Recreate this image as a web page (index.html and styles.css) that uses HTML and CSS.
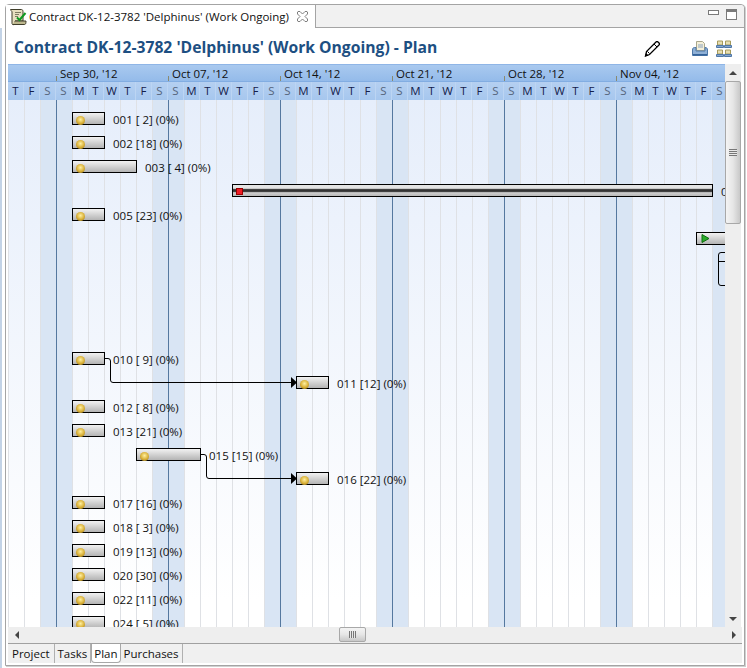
FILE: index.html
```html
<!DOCTYPE html>
<html lang="en">
<head>
<meta charset="UTF-8">
<title>Contract Plan</title>
<link rel="stylesheet" href="styles.css">
</head>
<body>
<div class="window">
    <div class="tabstrip">
        <div class="editor-tab">
            <svg class="doc-icon" width="17" height="18" viewBox="0 0 17 18">
                <path d="M.5 1.500h11c1 0 1.500 1 1.500 2V13H5v2.500c0 1.500-3 1.500-3 0V4c0-1-1.500-1.500-1.500-2.500z" fill="#e6dfc0" stroke="#3f3d2a"/>
                <path d="M2.500 16.500h12c1 0 1.500-1 1.500-3.500H5" fill="#bdb78e" stroke="#3f3d2a"/>
                <path d="M5 4.500h6M5 6.500h4M5 8.500h3" stroke="#7d7b62"/>
                <path d="M7 9.500l2.500 2.500 6-7" fill="none" stroke="#0f9a22" stroke-width="2"/>
            </svg>
            <span class="editor-tab-label">Contract DK-12-3782 'Delphinus' (Work Ongoing)</span>
            <svg class="close-icon" width="11" height="11" viewBox="0 0 11 11">
                <path d="M1 .5h2l2.500 2.500L8 .5h2l.5.5v2L8 5.500 10.500 8v2l-.5.500H8L5.500 8 3 10.500H1l-.5-.5V8L3 5.500.5 3V1z" fill="#fff" stroke="#7f7f7f"/>
            </svg>
        </div>
        <div class="window-btns">
            <span class="btn-min"></span>
            <span class="btn-max"></span>
        </div>
    </div>

    <div class="title-bar">
        <h2>Contract DK-12-3782 'Delphinus' (Work Ongoing) - Plan</h2>
        <svg class="pencil" width="16" height="16" viewBox="0 0 16 16">
            <path d="M12 1q1-1 2 0l1 1q1 1 0 2l-9.500 9.500-4 1.500 1-4.500z" fill="#fff" stroke="#000" stroke-width="1.300"/>
            <path d="M3.500 10.500l2 2M10 3l3 3" stroke="#000"/>
            <path d="M1 15.500l1-3.500 2.500 2.500z" fill="#000"/>
        </svg>
        <svg class="printer" width="16" height="16" viewBox="0 0 16 16">
            <path d="M4.500.5h6l2 2v7h-8z" fill="#f4efd8" stroke="#a9a68c"/>
            <path d="M6 4h5M6 6h5" stroke="#8ba3c0"/>
            <path d="M.5 9c0-2 1-2.500 2-2.500h1.500V10h9V6.500c1.500 0 2.500.5 2.500 2.500v5.500H.5z" fill="#8fb0d6" stroke="#4e78a8"/>
            <path d="M1 13h14v1.500H1z" fill="#35639a"/>
        </svg>
        <svg class="layout-icon" width="16" height="17" viewBox="0 0 16 17">
            <path d="M1.500 1h5v4h-5zM9.500 1h5v4h-5zM1.500 10h5v4h-5zM9.500 10h5v4h-5z" fill="#e6ddb0" stroke="#a59a5c"/>
            <path d="M.5 5.500h7v2h-7zM8.500 5.500h7v2h-7zM.5 14.500h7v2h-7zM8.500 14.500h7v2h-7z" fill="#86a6cf" stroke="#4f77a6"/>
        </svg>
    </div>

    <div class="plan">
        <div class="chart">
            <div class="months">
                <span class="month month-first">Sep 30, '12</span>
                <span class="month">Oct 07, '12</span>
                <span class="month">Oct 14, '12</span>
                <span class="month">Oct 21, '12</span>
                <span class="month">Oct 28, '12</span>
                <span class="month">Nov 04, '12</span>
            </div>
            <div class="days">
                <span>T</span><span>F</span><span class="we">S</span><span class="we">S</span><span>M</span><span>T</span><span>W</span>
                <span>T</span><span>F</span><span class="we">S</span><span class="we">S</span><span>M</span><span>T</span><span>W</span>
                <span>T</span><span>F</span><span class="we">S</span><span class="we">S</span><span>M</span><span>T</span><span>W</span>
                <span>T</span><span>F</span><span class="we">S</span><span class="we">S</span><span>M</span><span>T</span><span>W</span>
                <span>T</span><span>F</span><span class="we">S</span><span class="we">S</span><span>M</span><span>T</span><span>W</span>
                <span>T</span><span>F</span><span class="we">S</span><span class="we">S</span><span>M</span><span>T</span><span>W</span>
                <span>T</span><span>F</span><span class="we">S</span>
            </div>
            <div class="canvas">
                <svg class="links" width="717" height="527" viewBox="0 0 717 527">
                    <path d="M97 258.500h3q2.500 0 2.500 2.500v19q0 2.500 2.500 2.500h180" fill="none" stroke="#000"/>
                    <path d="M283 277l6 5.500-6 5.500z" fill="#000"/>
                    <path d="M193 354.500h3q2.500 0 2.500 2.500v19q0 2.500 2.500 2.500h84" fill="none" stroke="#000"/>
                    <path d="M283 373l6 5.500-6 5.500z" fill="#000"/>
                    <path d="M717 152.500h-4q-2.500 0-2.500 2.500v28q0 2.500 2.500 2.500h4M710.500 161.500h6.500" fill="none" stroke="#000"/>
                </svg>

                <div class="task" style="top:12px;left:64px"><div class="bar" style="width:33px"><i class="dot"></i></div><span>001 [ 2] (0%)</span></div>
                <div class="task" style="top:36px;left:64px"><div class="bar" style="width:33px"><i class="dot"></i></div><span>002 [18] (0%)</span></div>
                <div class="task" style="top:60px;left:64px"><div class="bar" style="width:65px"><i class="dot"></i></div><span>003 [ 4] (0%)</span></div>
                <div class="task" style="top:84px;left:224px"><div class="bar bar-group" style="width:481px"><i class="stop"></i></div><span>004 [ 7] (0%)</span></div>
                <div class="task" style="top:108px;left:64px"><div class="bar" style="width:33px"><i class="dot"></i></div><span>005 [23] (0%)</span></div>
                <div class="task" style="top:132px;left:688px"><div class="bar" style="width:65px"><svg class="play" width="9" height="9" viewBox="0 0 9 9"><path d="M1 .5l7 4-7 4z" fill="#2bab2b" stroke="#0f6e0f"/></svg></div></div>
                <div class="task" style="top:252px;left:64px"><div class="bar" style="width:33px"><i class="dot"></i></div><span>010 [ 9] (0%)</span></div>
                <div class="task" style="top:276px;left:288px"><div class="bar" style="width:33px"><i class="dot"></i></div><span>011 [12] (0%)</span></div>
                <div class="task" style="top:300px;left:64px"><div class="bar" style="width:33px"><i class="dot"></i></div><span>012 [ 8] (0%)</span></div>
                <div class="task" style="top:324px;left:64px"><div class="bar" style="width:33px"><i class="dot"></i></div><span>013 [21] (0%)</span></div>
                <div class="task" style="top:348px;left:128px"><div class="bar" style="width:65px"><i class="dot"></i></div><span>015 [15] (0%)</span></div>
                <div class="task" style="top:372px;left:288px"><div class="bar" style="width:33px"><i class="dot"></i></div><span>016 [22] (0%)</span></div>
                <div class="task" style="top:396px;left:64px"><div class="bar" style="width:33px"><i class="dot"></i></div><span>017 [16] (0%)</span></div>
                <div class="task" style="top:420px;left:64px"><div class="bar" style="width:33px"><i class="dot"></i></div><span>018 [ 3] (0%)</span></div>
                <div class="task" style="top:444px;left:64px"><div class="bar" style="width:33px"><i class="dot"></i></div><span>019 [13] (0%)</span></div>
                <div class="task" style="top:468px;left:64px"><div class="bar" style="width:33px"><i class="dot"></i></div><span>020 [30] (0%)</span></div>
                <div class="task" style="top:492px;left:64px"><div class="bar" style="width:33px"><i class="dot"></i></div><span>022 [11] (0%)</span></div>
                <div class="task" style="top:516px;left:64px"><div class="bar" style="width:33px"><i class="dot"></i></div><span>024 [ 5] (0%)</span></div>
            </div>
        </div>
        <div class="vscroll">
            <div class="arrow"><i class="tri-up"></i></div>
            <div class="vthumb"><i class="vgrip"></i></div>
            <div class="track"></div>
            <div class="arrow"><i class="tri-down"></i></div>
        </div>
    </div>

    <div class="hscroll">
        <div class="arrow-h"><i class="tri-left"></i></div>
        <div class="hthumb"><i class="hgrip"></i></div>
        <div class="track"></div>
        <div class="arrow-h"><i class="tri-right"></i></div>
    </div>

    <div class="sheet-tabs">
        <span class="sheet-tab">Project</span>
        <span class="sheet-tab">Tasks</span>
        <span class="sheet-tab active">Plan</span>
        <span class="sheet-tab">Purchases</span>
    </div>
</div>
</body>
</html>
```

FILE: styles.css
```css
html, body {
    height: 100%;
}

body {
    margin: 0;
    overflow: hidden;
    font-family: "Open Sans", "Noto Sans", sans-serif;
    font-size: 11.5px;
    color: #111;
    background: linear-gradient(#fff 28px, #c3d3e6 28px, #c3d3e6 100%) no-repeat 0 0 / 2px 100%, #fff;
}

.window {
    box-sizing: border-box;
    width: 740px;
    height: 662px;
    margin: 4px 0 0 5px;
    border: 1px solid #a4a4a4;
    border-radius: 4px 4px 0 0;
    background: #fff;
    box-shadow: 1px 1px 0 #d0d0d0;
}

/* top tab */
.tabstrip {
    display: flex;
    height: 23px;
    background: #f1f1f1;
    border-radius: 4px 4px 0 0;
}

.editor-tab {
    display: flex;
    align-items: center;
    box-sizing: border-box;
    width: 310px;
    height: 23px;
    padding-left: 4px;
    background: #fff;
    border-right: 1px solid #a4a4a4;
}

.editor-tab-label {
    margin-left: 2px;
    white-space: nowrap;
}

.close-icon {
    margin-left: 8px;
}

.window-btns {
    display: flex;
    flex: 1;
    justify-content: flex-end;
    gap: 7px;
    padding: 4px 7px 0 0;
    border-bottom: 1px solid #a4a4a4;
}

.btn-min {
    width: 9px;
    height: 3px;
    margin-top: 1px;
    border: 1px solid #7a7a7a;
    background: #fff;
}

.btn-max {
    width: 9px;
    height: 7px;
    border: 1px solid #7a7a7a;
    border-top-width: 3px;
    background: #fff;
}

/* form title */
.title-bar {
    display: flex;
    align-items: center;
    height: 36px;
    padding-left: 8px;
}

.title-bar h2 {
    flex: 1;
    margin: 2px 0 0;
    font-size: 15.7px;
    font-weight: 700;
    color: #1d4f82;
    white-space: nowrap;
}

.pencil {
    margin: 6px 32px 0 0;
}

.printer {
    margin: 6px 8px 0 0;
}

.layout-icon {
    margin: 5px 12px 0 0;
}

/* gantt */
.plan {
    display: flex;
    height: 563px;
    padding: 0 2px;
}

.chart {
    width: 717px;
    overflow: hidden;
}

.months {
    display: flex;
    box-sizing: border-box;
    height: 17px;
    padding-left: 48px;
    background: linear-gradient(#a9c9ef, #94bbea);
    border-top: 1px solid #8fb5e6;
}

.month {
    flex: 0 0 112px;
    box-sizing: border-box;
    padding-left: 4px;
    line-height: 17px;
    white-space: nowrap;
    background: linear-gradient(#8a8a70, #8a8a70) no-repeat 0 100% / 1px 5px;
}

.days {
    display: flex;
    height: 19px;
    background: linear-gradient(#b5d0f1, #a6c7ee);
    border-top: 1px solid #82ade2;
    box-sizing: border-box;
}

.days span {
    flex: 0 0 16px;
    box-sizing: border-box;
    line-height: 18px;
    text-align: center;
    color: #14204a;
    border-right: 1px solid #bcd5f3;
}

.days .we {
    color: #55647c;
}

.canvas {
    position: relative;
    height: 527px;
    overflow: hidden;
    background:
        linear-gradient(90deg, #55789f 1px, transparent 1px) 48px 0 / 112px 100%,
        linear-gradient(90deg, #dfe1e5 1px, transparent 1px) 0 0 / 16px 100%,
        linear-gradient(90deg, #d9e5f4 32px, transparent 32px) 32px 0 / 112px 100%,
        linear-gradient(#e6eefb, #fff 95%);
}

.links {
    position: absolute;
    top: 0;
    left: 0;
}

.task {
    position: absolute;
    display: flex;
    align-items: center;
    gap: 8px;
    height: 13px;
    white-space: nowrap;
}

.task span {
    line-height: 13px;
    position: relative;
    top: 1px;
}

.bar {
    position: relative;
    flex: none;
    box-sizing: border-box;
    height: 13px;
    border: 1px solid #000;
    background: linear-gradient(#f2f2f2, #b4b4b4);
}

.bar-group {
    background: linear-gradient(#e4e4e4 30%, #333 42%, #333 58%, #cfcfcf 70%, #b8b8b8);
}

.dot {
    position: absolute;
    top: 3px;
    left: 3px;
    width: 9px;
    height: 9px;
    border-radius: 50%;
    background: radial-gradient(circle at 50% 40%, #fff0a0, #d8ae34 55%, #7f6622);
}

.stop {
    position: absolute;
    top: 3px;
    left: 3px;
    width: 5px;
    height: 5px;
    border: 1px solid #900;
    background: #ee1c25;
}

.play {
    position: absolute;
    top: 1px;
    left: 4px;
}

/* scrollbars */
.vscroll {
    display: flex;
    flex-direction: column;
    width: 16px;
    background: #eeeeee;
}

.track {
    flex: 1;
}

.arrow {
    display: flex;
    align-items: center;
    justify-content: center;
    height: 17px;
}

.vthumb {
    display: flex;
    align-items: center;
    justify-content: center;
    box-sizing: border-box;
    height: 143px;
    border: 1px solid #a8a8a8;
    border-radius: 2px;
    background: linear-gradient(90deg, #f4f4f4, #e6e6e6 50%, #c8c8c8);
}

.vgrip {
    width: 8px;
    height: 7px;
    background: repeating-linear-gradient(#777 0, #777 1px, #e8e8e8 1px, #e8e8e8 2px);
}

.hscroll {
    display: flex;
    box-sizing: border-box;
    height: 17px;
    margin: 0 2px;
    background: #eeeeee;
    border-bottom: 1px solid #a0a0a0;
}

.arrow-h {
    display: flex;
    align-items: center;
    justify-content: center;
    width: 17px;
}

.hthumb {
    display: flex;
    align-items: center;
    justify-content: center;
    box-sizing: border-box;
    width: 27px;
    height: 15px;
    margin: 0 0 0 314px;
    border: 1px solid #a8a8a8;
    border-radius: 2px;
    background: linear-gradient(#f4f4f4, #e6e6e6 50%, #c8c8c8);
}

.hgrip {
    width: 7px;
    height: 7px;
    background: repeating-linear-gradient(90deg, #777 0, #777 1px, #e8e8e8 1px, #e8e8e8 2px);
}

.tri-up, .tri-down, .tri-left, .tri-right {
    width: 0;
    height: 0;
    border: 4px solid transparent;
}

.tri-up {
    border-top-width: 0;
    border-bottom-color: #444;
}

.tri-down {
    border-bottom-width: 0;
    border-top-color: #444;
}

.tri-left {
    border-left-width: 0;
    border-right-color: #444;
}

.tri-right {
    border-right-width: 0;
    border-left-color: #444;
}

/* bottom tabs */
.sheet-tabs {
    display: flex;
    box-sizing: border-box;
    height: 19px;
    margin: 0 2px;
    background: #f0f0f0;
}

.sheet-tab {
    box-sizing: border-box;
    height: 19px;
    padding: 0 3px;
    line-height: 19px;
    border-right: 1px solid #b0b0b0;
}

.sheet-tab:first-child {
    padding: 0 4px;
}

.sheet-tab.active {
    padding: 0 2px;
    background: #fff;
    border: 1px solid #a8a8a8;
    border-top: none;
    border-radius: 0 0 4px 4px;
}
```
